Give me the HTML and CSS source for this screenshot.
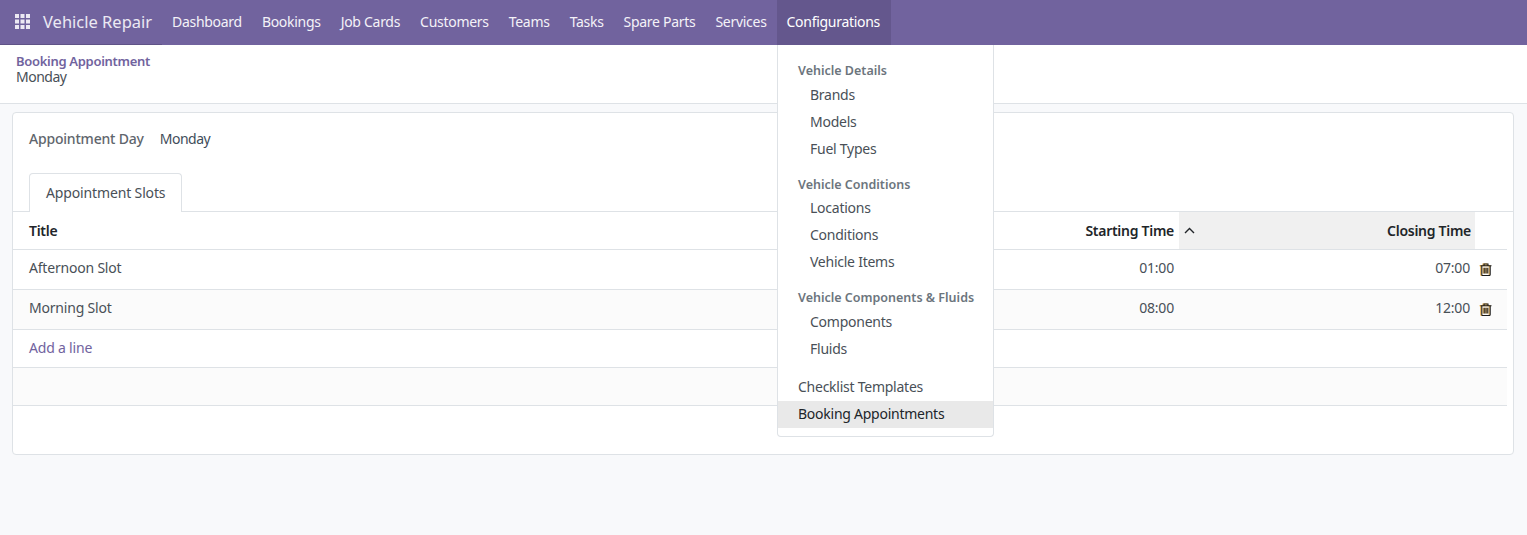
FILE: index.html
```html
<!DOCTYPE html>
<html>
	<head>
		<meta charset="utf-8" />
		<title>Vehicle Repair</title>
		<link rel="stylesheet" href="styles.css">
	</head>
	<body>
		<header class="navbar">
			<div class="brand">
				<svg class="apps" width="15" height="15" viewBox="0 0 15 15">
					<rect x="0" y="0" width="4" height="4" /><rect x="5.500" y="0" width="4" height="4" /><rect x="11" y="0" width="4" height="4" />
					<rect x="0" y="5.500" width="4" height="4" /><rect x="5.500" y="5.500" width="4" height="4" /><rect x="11" y="5.500" width="4" height="4" />
					<rect x="0" y="11" width="4" height="4" /><rect x="5.500" y="11" width="4" height="4" /><rect x="11" y="11" width="4" height="4" />
				</svg>
				<span class="app-name">Vehicle Repair</span>
			</div>
			<nav class="menu">
				<a>Dashboard</a>
				<a>Bookings</a>
				<a>Job Cards</a>
				<a>Customers</a>
				<a>Teams</a>
				<a>Tasks</a>
				<a>Spare Parts</a>
				<a>Services</a>
				<a class="open">Configurations</a>
			</nav>
		</header>

		<div class="dropdown">
			<div class="drop-head">Vehicle Details</div>
			<a class="sub">Brands</a>
			<a class="sub">Models</a>
			<a class="sub">Fuel Types</a>
			<div class="drop-head mid">Vehicle Conditions</div>
			<a class="sub">Locations</a>
			<a class="sub">Conditions</a>
			<a class="sub">Vehicle Items</a>
			<div class="drop-head last">Vehicle Components &amp; Fluids</div>
			<a class="sub">Components</a>
			<a class="sub">Fluids</a>
			<a class="top first">Checklist Templates</a>
			<a class="top active">Booking Appointments</a>
		</div>

		<div class="control">
			<div class="crumb">Booking Appointment</div>
			<div class="crumb-now">Monday</div>
		</div>

		<main class="sheet">
			<div class="field">
				<span class="label">Appointment Day</span>
				<span class="value">Monday</span>
			</div>
			<div class="tabs">
				<a class="tab">Appointment Slots</a>
			</div>
			<table class="slots">
				<colgroup>
					<col />
					<col class="c-start" />
					<col class="c-close" />
					<col class="c-del" />
				</colgroup>
				<thead>
					<tr>
						<th>Title</th>
						<th class="num">Starting Time</th>
						<th class="num sorted">
							<svg class="chev" width="11" height="7" viewBox="0 0 11 7"><path d="M1 6l4.500-4.500L10 6" /></svg>
							Closing Time
						</th>
						<th></th>
					</tr>
				</thead>
				<tbody>
					<tr class="line">
						<td>Afternoon Slot</td>
						<td class="num">01:00</td>
						<td class="num">07:00</td>
						<td class="del"><svg class="trash" width="12" height="13" viewBox="0 0 12 13"><use href="#bin" /></svg></td>
					</tr>
					<tr class="line odd">
						<td>Morning Slot</td>
						<td class="num">08:00</td>
						<td class="num">12:00</td>
						<td class="del"><svg class="trash" width="12" height="13" viewBox="0 0 12 13"><use href="#bin" /></svg></td>
					</tr>
					<tr class="add">
						<td colspan="4"><a>Add a line</a></td>
					</tr>
					<tr class="blank odd">
						<td colspan="4"></td>
					</tr>
				</tbody>
			</table>
		</main>

		<svg width="0" height="0" class="defs">
			<symbol id="bin" viewBox="0 0 12 13">
				<path d="M4 2.500V1h4v1.500M.5 2.800h11M1.800 3v8.600c0 .5.3.9.8.9h6.800c.5 0 .8-.4.8-.9V3M4.200 4.800v5.800M6 4.800v5.800M7.800 4.800v5.800" />
			</symbol>
		</svg>
	</body>
</html>
```

FILE: styles.css
```css
*{margin: 0;padding: 0;box-sizing: border-box;}
html,body{height: 100%;}
body
{
	background: #f8f9fb;
	color: #495057;
	font-family: "Noto Sans", "Open Sans", sans-serif;
	font-size: 14px;
	overflow: hidden;
}
a{cursor: pointer;}

.navbar
{
	display: flex;
	height: 45px;
	background: #71639e;
	color: #f4f2f8;
}
.brand
{
	display: flex;
	align-items: center;
	width: 162px;
	padding: 0 0 2px 15px;
	border-bottom: 1px solid #5f5387;
}
.apps{fill: #ece9f3;}
.app-name{margin-left: 13px;font-size: 16.5px;color: #ece9f3;}
.menu{display: flex;}
.menu a
{
	display: flex;
	align-items: center;
	padding: 0 10px 2px;
	letter-spacing: -0.29px;
}
.menu a.open{padding-right: 11px;background: #64578d;color: #fff;}

.dropdown
{
	position: absolute;
	left: 777px;
	top: 45px;
	width: 217px;
	height: 392px;
	padding-top: 15px;
	background: #fff;
	border: 1px solid #dee2e6;
	border-top: 0;
	border-radius: 0 0 4px 4px;
	z-index: 5;
	letter-spacing: -0.25px;
}
.drop-head
{
	height: 22px;
	line-height: 22px;
	padding-left: 20px;
	font-size: 12.5px;
	font-weight: 600;
	color: #6c757d;
	letter-spacing: 0;
}
.drop-head.mid{margin: 10.5px 0 -1px;}
.drop-head.last{margin-top: 11.5px;}
.dropdown a{display: block;height: 27px;line-height: 26px;}
.dropdown a.sub{padding-left: 32px;}
.dropdown a.top{padding-left: 20px;}
.dropdown a.first{margin-top: 11px;}
.dropdown a.active{background: #e9e9e9;color: #212529;}

.control
{
	height: 59px;
	padding: 8px 16px 0;
	background: #fff;
	border-bottom: 1px solid #dee2e6;
}
.crumb{font-size: 13px;font-weight: 600;line-height: 17px;color: #71639e;letter-spacing: -0.3px;}
.crumb-now{line-height: 14px;letter-spacing: -0.5px;}

.sheet
{
	height: 343px;
	margin: 8px 13px 0 12px;
	padding-top: 16px;
	background: #fff;
	border: 1px solid #dee2e6;
	border-radius: 4px;
}
.field{display: flex;gap: 16px;padding-left: 16px;line-height: 20px;letter-spacing: -0.2px;}
.label{font-weight: 500;color: #5f666d;}
.value{color: #3f4d5a;letter-spacing: -0.5px;}
.tabs
{
	display: flex;
	height: 39px;
	margin-top: 24px;
	padding-left: 16px;
	border-bottom: 1px solid #dee2e6;
}
.tab
{
	height: 39px;
	line-height: 37px;
	padding: 0 16px;
	background: #fff;
	border: 1px solid #dee2e6;
	border-bottom: 0;
	border-radius: 4px 4px 0 0;
	letter-spacing: -0.14px;
}

.slots
{
	width: 1494px;
	border-collapse: collapse;
	table-layout: fixed;
	letter-spacing: -0.2px;
}
.c-start{width: 120px;}
.c-close{width: 296px;}
.c-del{width: 32px;}
.slots th
{
	height: 37px;
	padding: 0 5px 0 16px;
	text-align: left;
	font-weight: 600;
	color: #212529;
	letter-spacing: -0.28px;
	border-bottom: 1px solid #dee2e6;
}
.slots td
{
	padding: 0 5px 0 16px;
	border-bottom: 1px solid #dee2e6;
}
.slots .num{text-align: right;}
.slots th.sorted{position: relative;padding-right: 4px;background: #f0f0f0;}
.chev
{
	position: absolute;
	left: 5px;
	top: 15px;
	fill: none;
	stroke: #212529;
	stroke-width: 1.4;
}
.line td{height: 40px;padding-bottom: 4px;}
.line.odd td{background: #fbfbfb;}
.add td{height: 38px;padding-bottom: 2px;}
.add a{color: #71639e;}
.blank td{height: 38px;background: #fbfbfb;}
.slots td.del{padding: 2px 0 0 5px;}
.trash
{
	fill: none;
	stroke: #1b1b1b;
	stroke-width: 1.1;
	filter: drop-shadow(-0.5px 0 0 #e8a93a);
}
.defs{position: absolute;}
```
